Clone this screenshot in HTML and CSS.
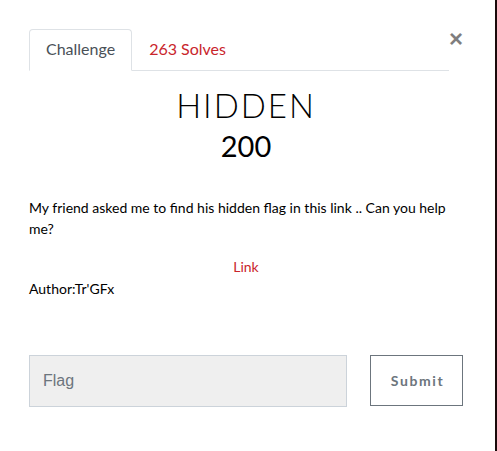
FILE: index.html
```
<!DOCTYPE html>
<html>
<head>
<meta charset="utf-8">
<link rel="stylesheet" href="styles.css">
</head>
<body>
<div class="modal">
  <div class="head">
    <ul class="tabs">
      <li class="tab active">Challenge</li>
      <li class="tab solves">263 Solves</li>
    </ul>
    <button class="close">×</button>
  </div>
  <h2 class="title">HIDDEN</h2>
  <h3 class="value">200</h3>
  <div class="desc">
    <p>My friend asked me to find his hidden flag in this link .. Can you help me?</p>
    <p class="link-row"><a class="link" href="#">Link</a></p>
    <p class="author">Author:Tr'GFx</p>
  </div>
  <form class="flag-form">
    <input class="flag" type="text" placeholder="Flag">
    <button class="submit" type="button">Submit</button>
  </form>
</div>
<div class="backdrop"></div>
</body>
</html>
```
FILE: styles.css
```
html, body { margin: 0; padding: 0; }
body {
  display: flex;
  width: 497px;
  height: 451px;
  overflow: hidden;
  font-family: Lato, "Noto Sans", sans-serif;
  color: #212529;
  background: #fff;
}
.modal {
  width: 495px;
  height: 451px;
  box-sizing: border-box;
  padding: 29px 32px 0 29px;
  background: #fff;
}
.backdrop { width: 2px; height: 451px; background: #1a0b0b; }
.head { display: flex; align-items: flex-start; }
.tabs {
  list-style: none;
  margin: 0;
  padding: 0;
  display: flex;
  width: 420px;
  border-bottom: 1px solid #dee2e6;
}
.tab {
  font-size: 16px;
  line-height: 23px;
  padding: 7px 16px 10px;
  border: 1px solid transparent;
  border-top-left-radius: 4px;
  border-top-right-radius: 4px;
  margin-bottom: -1px;
}
.tab.active {
  color: #495057;
  border-color: #dee2e6 #dee2e6 #fff;
  background: #fff;
}
.tab.solves { color: #c9252c; }
.close {
  margin-left: auto;
  margin-top: -2px;
  background: none;
  border: 0;
  padding: 0;
  font-family: "Liberation Sans", Arial, sans-serif;
  font-size: 24px;
  font-weight: 700;
  line-height: 1;
  color: #000;
  opacity: .5;
  margin-right: 0;
}
.title {
  margin: 14px 0 0;
  text-align: center;
  font-weight: 300;
  font-size: 33px;
  line-height: 40px;
  letter-spacing: 2px;
  color: #000;
}
.value {
  margin: 1px 0 0;
  text-align: center;
  font-weight: 400;
  font-size: 29px;
  line-height: 40px;
  color: #000;
}
.desc { margin-top: 31px; font-size: 14px; line-height: 21px; color: #000; }
.desc p { margin: 0; }
.link-row { text-align: center; margin-top: 17px !important; }
.author { margin-top: 1px !important; }
.link { color: #c9252c; text-decoration: none; }
.flag-form { display: flex; gap: 23px; margin-top: 56px; }
.flag {
  width: 318px;
  height: 52px;
  flex: none;
  box-sizing: border-box;
  background: #efefef;
  border: 1px solid #ccd3da;
  padding: 0 13px;
  font-family: "Liberation Sans", Arial, sans-serif;
  font-size: 16px;
  color: #495057;
  outline: none;
}
.flag::placeholder { color: #6c757d; }
.submit {
  width: 93px;
  height: 51px;
  flex: none;
  box-sizing: border-box;
  background: #fff;
  border: 1px solid #6c757d;
  font-family: Lato, sans-serif;
  font-weight: 700;
  font-size: 14px;
  letter-spacing: 1.6px;
  color: #6c757d;
  padding: 0 0 0 2px;
}
```
